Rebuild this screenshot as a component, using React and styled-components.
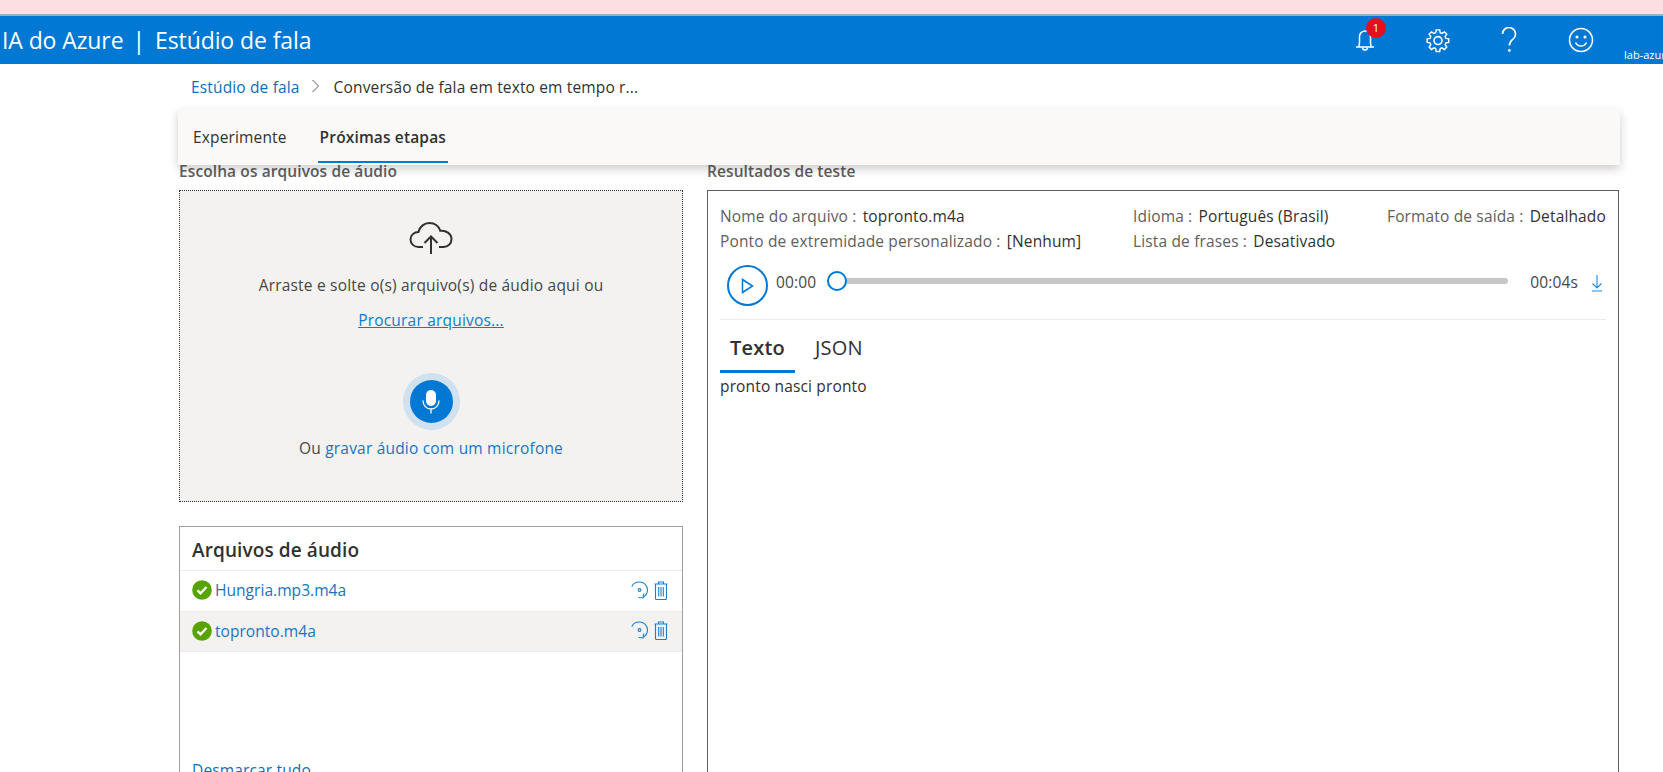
import React from 'react';
import styled, { createGlobalStyle } from 'styled-components';

const GlobalStyle = createGlobalStyle`
  html, body {
    margin: 0;
    padding: 0;
    height: 100%;
    overflow: hidden;
    background: #fff;
    font-family: "Open Sans", "Noto Sans", "Liberation Sans", sans-serif;
    color: #323130;
  }
  #root { height: 100%; }
`;

const Page = styled.div`
  height: 772px;
  overflow: hidden;
  display: flex;
  flex-direction: column;
`;

const Banner = styled.div`
  height: 14px;
  flex: none;
  background: #fcdee3;
  border-bottom: 2px solid #8fb4cf;
`;

const Header = styled.header`
  height: 48px;
  flex: none;
  background: #0078d4;
  color: #fff;
  display: flex;
  align-items: center;
  position: relative;
  padding-left: 2px;
`;

const Brand = styled.div`
  font-size: 23px;
  letter-spacing: -0.1px;
  white-space: nowrap;
  span { margin: 0 10px 0 9px; }
`;

const HeaderIcons = styled.div`
  margin-left: auto;
  display: flex;
  align-items: center;
  height: 100%;
  width: 308px;
`;

const HeaderIcon = styled.div`
  position: relative;
  width: ${p => p.$w}px;
  display: flex;
  justify-content: flex-start;
`;

const Badge = styled.div`
  position: absolute;
  top: -10px;
  left: 11px;
  width: 20px;
  height: 20px;
  border-radius: 50%;
  background: #e3101d;
  color: #fff;
  font-size: 11px;
  line-height: 20px;
  text-align: center;
`;

const UserName = styled.div`
  position: absolute;
  right: 0;
  bottom: 2px;
  width: 39px;
  overflow: hidden;
  white-space: nowrap;
  font-size: 11px;
`;

const Main = styled.main`
  flex: 1;
  min-height: 0;
  margin: 0 43px 0 178px;
  display: flex;
  flex-direction: column;
`;

const Breadcrumb = styled.nav`
  height: 44px;
  flex: none;
  padding: 1px 0 0 13px;
  display: flex;
  align-items: center;
  font-size: 15.5px;
  letter-spacing: 0.15px;
  a { color: #0f6cbd; }
  svg { margin: 0 14px 2px 11px; }
`;

const TabBar = styled.div`
  height: 56px;
  flex: none;
  box-sizing: border-box;
  background: #faf9f8;
  box-shadow: 0 4px 9px rgba(0, 0, 0, 0.2);
  display: flex;
  padding-left: 13px;
  position: relative;
  z-index: 2;
`;

const Tab = styled.div`
  height: 54px;
  box-sizing: border-box;
  padding: 3px 2px 0;
  margin: 0 29px 0 0;
  display: flex;
  align-items: center;
  font-size: 15.5px;
  letter-spacing: 0.15px;
  font-weight: ${p => (p.$active ? 600 : 400)};
  border-bottom: 2px solid ${p => (p.$active ? '#0078d4' : 'transparent')};
`;

const Columns = styled.div`
  flex: 1;
  min-height: 0;
  display: grid;
  grid-template-columns: 504px 912px;
  column-gap: 24px;
  padding-left: 1px;
`;

const Column = styled.section`
  min-width: 0;
  display: flex;
  flex-direction: column;
`;

const SectionTitle = styled.h2`
  margin: 0;
  height: 25px;
  flex: none;
  font-size: 15.5px;
  font-weight: 600;
  letter-spacing: 0.1px;
  line-height: 12px;
  color: #605e5c;
`;

const DropZone = styled.div`
  height: 312px;
  flex: none;
  box-sizing: border-box;
  border: 1px dotted #323130;
  background: #f3f2f1;
  display: flex;
  flex-direction: column;
  align-items: center;
  padding-top: 30px;
  font-size: 15.5px;
  letter-spacing: 0.2px;
  color: #484644;
`;

const DropText = styled.div`
  margin-top: 20px;
  line-height: 20px;
`;

const BrowseLink = styled.a`
  margin-top: 15px;
  line-height: 20px;
  color: #0f7bd0;
  text-decoration: underline;
`;

const MicRing = styled.div`
  margin-top: 43px;
  width: 57px;
  height: 57px;
  border-radius: 50%;
  background: #d0e1ef;
  display: flex;
  align-items: center;
  justify-content: center;
`;

const MicButton = styled.div`
  width: 43px;
  height: 43px;
  border-radius: 50%;
  background: #0078d4;
  display: flex;
  align-items: center;
  justify-content: center;
`;

const RecordText = styled.div`
  margin-top: 8px;
  line-height: 20px;
  a { color: #1b74bd; }
`;

const FilesPanel = styled.div`
  margin-top: 24px;
  height: 300px;
  flex: none;
  box-sizing: border-box;
  border: 1px solid #a19f9d;
  display: flex;
  flex-direction: column;
`;

const FilesTitle = styled.h3`
  margin: 0;
  height: 43px;
  flex: none;
  box-sizing: border-box;
  padding: 3px 0 0 12px;
  display: flex;
  align-items: center;
  font-size: 19px;
  font-weight: 600;
  letter-spacing: 0.1px;
`;

const FileRow = styled.div`
  height: 41px;
  flex: none;
  box-sizing: border-box;
  border-top: 1px solid #edebe9;
  border-bottom: ${p => (p.$selected ? '1px solid #edebe9' : 'none')};
  background: ${p => (p.$selected ? '#f3f2f1' : '#fff')};
  padding: 0 14px 2px 12px;
  display: flex;
  align-items: center;
  font-size: 15.6px;
  color: #1b74bd;
  span { margin-left: 3px; flex: 1; }
  svg + svg { margin-left: 5px; }
`;

const ClearLink = styled.a`
  margin: 107px 0 0 12px;
  font-size: 15.5px;
  letter-spacing: 0.15px;
  color: #0f6cbd;
`;

const ResultsPanel = styled.div`
  height: 600px;
  flex: none;
  box-sizing: border-box;
  border: 1px solid #605e5c;
  padding: 13px 12px 0;
  font-size: 15.5px;
  letter-spacing: 0.15px;
`;

const InfoGrid = styled.div`
  display: flex;
  justify-content: space-between;
  height: 54px;
`;

const InfoColumn = styled.div`
  display: flex;
  flex-direction: column;
`;

const InfoLine = styled.div`
  height: 25px;
  line-height: 25px;
  white-space: nowrap;
  color: #605e5c;
  b { font-weight: 400; color: #323130; margin-left: 2px; }
`;

const Player = styled.div`
  height: 55px;
  box-sizing: border-box;
  display: flex;
  align-items: flex-start;
  padding-left: 7px;
  border-bottom: 1px solid #edebe9;
  margin-top: 7px;
`;

const PlayButton = styled.div`
  width: 41px;
  height: 41px;
  box-sizing: border-box;
  border: 2px solid #0078d4;
  border-radius: 50%;
  flex: none;
  display: flex;
  align-items: center;
  justify-content: center;
`;

const Time = styled.div`
  margin: 7px 0 0 8px;
  line-height: 20px;
  color: #484644;
  white-space: nowrap;
`;

const Track = styled.div`
  flex: 1;
  height: 6px;
  margin: 13px 0 0 13px;
  background: #c8c6c4;
  border-radius: 3px;
  position: relative;
`;

const Thumb = styled.div`
  position: absolute;
  left: -2px;
  top: -7px;
  width: 20px;
  height: 20px;
  box-sizing: border-box;
  border: 2px solid #0078d4;
  border-radius: 50%;
  background: #fff;
`;

const EndTime = styled(Time)`
  margin-left: 22px;
`;

const Download = styled.div`
  margin: 9px 3px 0 13px;
`;

const ResultTabs = styled.div`
  display: flex;
  height: 53px;
`;

const ResultTab = styled.div`
  box-sizing: border-box;
  height: 53px;
  padding: 4px 10px 0;
  margin-right: 10px;
  font-size: 20px;
  letter-spacing: 0.2px;
  font-weight: ${p => (p.$active ? 600 : 400)};
  display: flex;
  align-items: center;
  border-bottom: 3px solid ${p => (p.$active ? '#0078d4' : 'transparent')};
`;

const Transcript = styled.div`
  line-height: 22px;
  margin-top: 2px;
`;

const BellIcon = () => (
  <svg width="20" height="24" viewBox="0 0 20 24" fill="none" stroke="#fff" strokeWidth="1.5">
    <path d="M1 19h18M3.5 19c.8-1.4 1-3 1-5V8.5a5.5 5.5 0 0 1 11 0V14c0 2 .2 3.6 1 5" />
    <path d="M7.5 19.5a2.5 2.5 0 0 0 5 0" />
  </svg>
);

const GearIcon = () => (
  <svg width="28" height="28" viewBox="0 0 24 24" fill="none" stroke="#fff" strokeWidth="1.4">
    <path d="M10.3 2.5h3.4l.5 2.8 1.7.7 2.4-1.6 2.3 2.3-1.6 2.4.7 1.7 2.8.5v3.4l-2.8.5-.7 1.7 1.6 2.4-2.3 2.3-2.4-1.6-1.7.7-.5 2.8h-3.4l-.5-2.8-1.7-.7-2.4 1.6-2.3-2.3 1.6-2.4-.7-1.7-2.8-.5v-3.4l2.8-.5.7-1.7-1.6-2.4 2.3-2.3 2.4 1.6 1.7-.7z" transform="translate(1.4 1.1) scale(.88)" />
    <circle cx="12" cy="12.5" r="3.4" />
  </svg>
);

const HelpIcon = () => (
  <svg width="18" height="26" viewBox="0 0 18 26" fill="none" stroke="#fff" strokeWidth="1.6">
    <path d="M2.5 7a6.5 6.5 0 1 1 10.5 5.2c-2.2 1.7-3.6 2.900-3.600 6.300" />
    <circle cx="9.400" cy="23.500" r=".6" fill="#fff" />
  </svg>
);

const SmileIcon = () => (
  <svg width="26" height="26" viewBox="0 0 26 26" fill="none" stroke="#fff" strokeWidth="1.500">
    <circle cx="13" cy="13" r="11.500" />
    <circle cx="9" cy="10" r=".8" fill="#fff" />
    <circle cx="17" cy="10" r=".8" fill="#fff" />
    <path d="M7.500 15.500c1.200 2.300 3.200 3.500 5.500 3.500s4.300-1.200 5.500-3.500" />
  </svg>
);

const ChevronIcon = () => (
  <svg width="9" height="14" viewBox="0 0 9 14" fill="none" stroke="#605e5c" strokeWidth="1">
    <path d="M1.500 1l6 6-6 6" />
  </svg>
);

const CloudIcon = () => (
  <svg width="44" height="34" viewBox="0 0 44 34" fill="none" stroke="#323130" strokeWidth="2">
    <path d="M14 26H9.500C5 26 1.500 22.800 1.500 18.500S5 11 9.500 11c1-5 5.500-9 11-9 5 0 9.300 3.200 10.800 7.800 5.500-.8 11.200 2.800 11.200 8.400 0 4.500-3.500 7.800-8 7.800H30" />
    <path d="M22 33V16M15.500 22l6.500-6.500 6.500 6.500" />
  </svg>
);

const MicIcon = () => (
  <svg width="18" height="25" viewBox="0 0 18 25" fill="none">
    <rect x="4" y="1" width="10" height="16" rx="5" fill="#fff" />
    <path d="M1 11.500c0 5 3.500 8.500 8 8.500s8-3.500 8-8.500M9 20v4.500" stroke="#fff" strokeWidth="1.300" />
  </svg>
);

const CheckIcon = () => (
  <svg width="20" height="20" viewBox="0 0 20 20">
    <circle cx="10" cy="10" r="9.800" fill="#57a300" />
    <path d="M5.500 10.300l3 3 6-6.300" fill="none" stroke="#fff" strokeWidth="2.400" />
  </svg>
);

const ReprocessIcon = () => (
  <svg width="18" height="19" viewBox="0 0 18 19" fill="none" stroke="#1b7fd0" strokeWidth="1.100">
    <path d="M.8 5.500C2 2.700 5 1 8.500 1c4.500 0 8 3.500 8 8 0 3.200-1.800 5.800-4.500 7.200" />
    <circle cx="8.500" cy="9" r="1.400" />
    <path d="M12.800 12.500L12 17l-4.500-.5" />
  </svg>
);

const TrashIcon = () => (
  <svg width="14" height="19" viewBox="0 0 14 19" fill="none" stroke="#1b7fd0" strokeWidth="1.100">
    <path d="M.5 3h13M4.500 3V1h5v2M1.500 3v14.500c0 .6.400 1 1 1h9c.6 0 1-.4 1-1V3" />
    <path d="M4.700 6v9.500M7 6v9.500M9.300 6v9.500" />
  </svg>
);

const PlayIcon = () => (
  <svg width="13" height="16" viewBox="0 0 13 16" fill="none" stroke="#0078d4" strokeWidth="1.500">
    <path d="M1.500 1.500L11.500 8l-10 6.500z" />
  </svg>
);

const DownloadIcon = () => (
  <svg width="12" height="18" viewBox="0 0 12 18" fill="none" stroke="#1b8ae0" strokeWidth="1.100">
    <path d="M6 1v13M1.500 9.500L6 14l4.500-4.500M1 17h10" />
  </svg>
);

const files = [
  { name: 'Hungria.mp3.m4a', selected: false },
  { name: 'topronto.m4a', selected: true },
];

const App = () => (
  <>
    <GlobalStyle />
    <Page>
      <Banner />
      <Header>
        <Brand>IA do Azure<span>|</span>Estúdio de fala</Brand>
        <HeaderIcons>
          <HeaderIcon $w={69}>
            <BellIcon />
            <Badge>1</Badge>
          </HeaderIcon>
          <HeaderIcon $w={76}><GearIcon /></HeaderIcon>
          <HeaderIcon $w={68}><HelpIcon /></HeaderIcon>
          <HeaderIcon $w={40}><SmileIcon /></HeaderIcon>
        </HeaderIcons>
        <UserName>lab-azure</UserName>
      </Header>
      <Main>
        <Breadcrumb>
          <a>Estúdio de fala</a>
          <ChevronIcon />
          <span>Conversão de fala em texto em tempo r...</span>
        </Breadcrumb>
        <TabBar>
          <Tab>Experimente</Tab>
          <Tab $active>Próximas etapas</Tab>
        </TabBar>
        <Columns>
          <Column>
            <SectionTitle>Escolha os arquivos de áudio</SectionTitle>
            <DropZone>
              <CloudIcon />
              <DropText>Arraste e solte o(s) arquivo(s) de áudio aqui ou</DropText>
              <BrowseLink>Procurar arquivos...</BrowseLink>
              <MicRing>
                <MicButton><MicIcon /></MicButton>
              </MicRing>
              <RecordText>Ou <a>gravar áudio com um microfone</a></RecordText>
            </DropZone>
            <FilesPanel>
              <FilesTitle>Arquivos de áudio</FilesTitle>
              {files.map(file => (
                <FileRow key={file.name} $selected={file.selected}>
                  <CheckIcon />
                  <span>{file.name}</span>
                  <ReprocessIcon />
                  <TrashIcon />
                </FileRow>
              ))}
              <ClearLink>Desmarcar tudo</ClearLink>
            </FilesPanel>
          </Column>
          <Column>
            <SectionTitle>Resultados de teste</SectionTitle>
            <ResultsPanel>
              <InfoGrid>
                <InfoColumn>
                  <InfoLine>Nome do arquivo : <b>topronto.m4a</b></InfoLine>
                  <InfoLine>Ponto de extremidade personalizado : <b>[Nenhum]</b></InfoLine>
                </InfoColumn>
                <InfoColumn>
                  <InfoLine>Idioma : <b>Português (Brasil)</b></InfoLine>
                  <InfoLine>Lista de frases : <b>Desativado</b></InfoLine>
                </InfoColumn>
                <InfoColumn>
                  <InfoLine>Formato de saída : <b>Detalhado</b></InfoLine>
                </InfoColumn>
              </InfoGrid>
              <Player>
                <PlayButton><PlayIcon /></PlayButton>
                <Time>00:00</Time>
                <Track><Thumb /></Track>
                <EndTime>00:04s</EndTime>
                <Download><DownloadIcon /></Download>
              </Player>
              <ResultTabs>
                <ResultTab $active>Texto</ResultTab>
                <ResultTab>JSON</ResultTab>
              </ResultTabs>
              <Transcript>pronto nasci pronto</Transcript>
            </ResultsPanel>
          </Column>
        </Columns>
      </Main>
    </Page>
  </>
);

export default App;
